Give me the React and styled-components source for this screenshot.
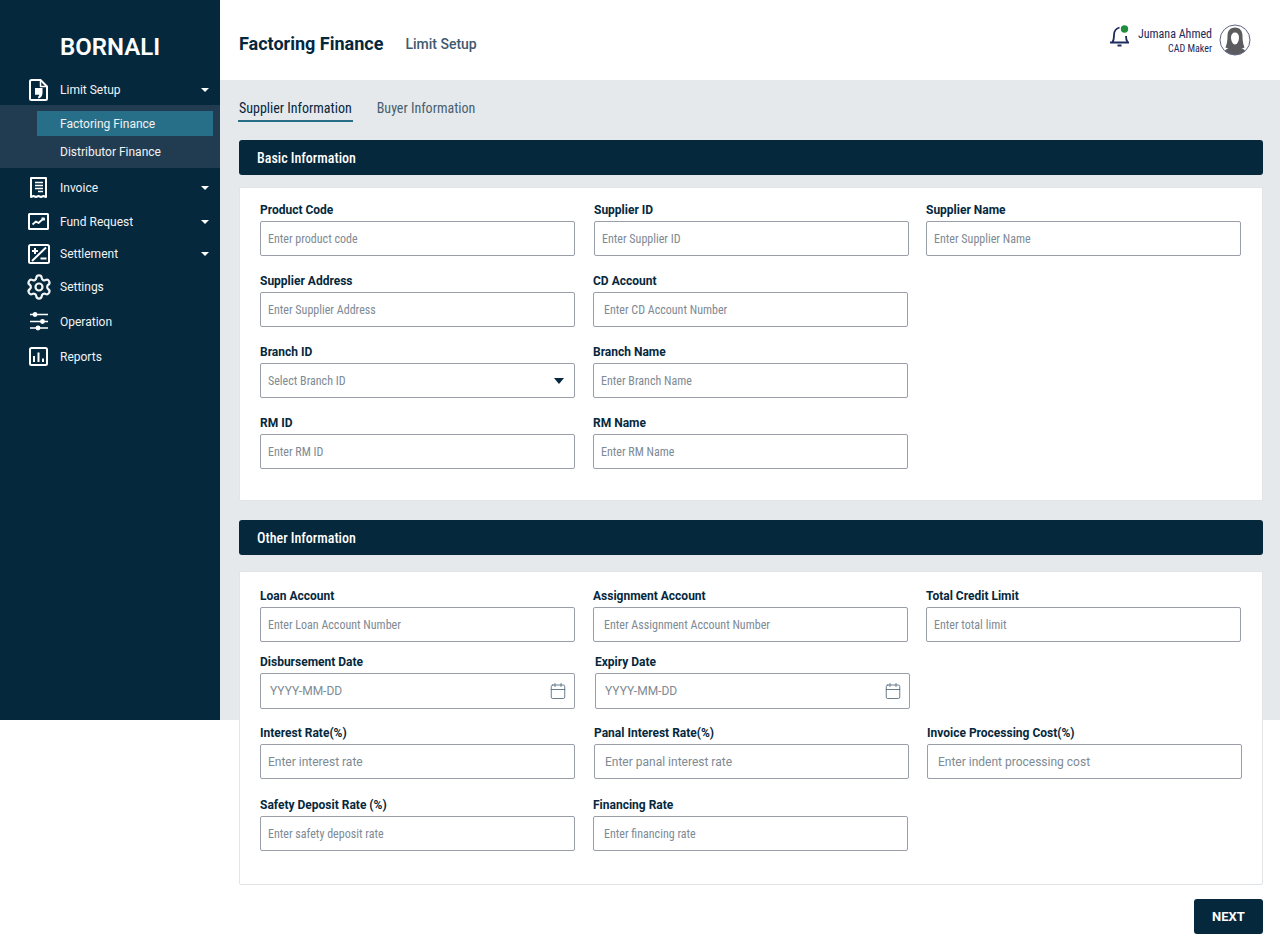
import React from 'react';
import styled, { createGlobalStyle } from 'styled-components';
import { Calendar, Settings } from 'lucide-react';

const GlobalStyle = createGlobalStyle`
  html, body {
    margin: 0;
    padding: 0;
    background: #fff;
    font-family: Roboto, "Liberation Sans", sans-serif;
  }
  * {
    box-sizing: border-box;
  }
`;

const NAVY = '#05283d';

const Shell = styled.div`
  display: grid;
  grid-template-columns: 220px 1fr;
  align-items: start;
  width: 1280px;
  height: 934px;
  overflow: hidden;
  background: linear-gradient(#e6e9ec 720px, #fff 720px);
`;

const Sidebar = styled.aside`
  height: 720px;
  background: ${NAVY};
  color: #fff;
`;

const Logo = styled.div`
  height: 74px;
  padding: 33px 0 0 60px;
  font-size: 24px;
  line-height: 28px;
  font-weight: 600;
`;

const NavItem = styled.div`
  display: flex;
  align-items: center;
  height: ${p => p.$h}px;
  padding: 0 11px 0 26px;
  font-size: 12px;
  color: #f1f3f5;
`;

const NavIcon = styled.span`
  display: flex;
  justify-content: center;
  align-items: center;
  width: 25px;
  margin-right: 9px;

  svg {
    flex-shrink: 0;
  }
`;

const NavLabel = styled.span`
  flex: 1;
  padding-top: 1px;
`;

const Caret = styled.span`
  width: 0;
  height: 0;
  border-left: 4px solid transparent;
  border-right: 4px solid transparent;
  border-top: 4px solid ${p => p.$color || '#fff'};
`;

const SelectCaret = styled(Caret)`
  border-width: 6px 5.5px 0;
`;

const SubMenu = styled.div`
  height: 63px;
  padding: 6px 7px 0 37px;
  background: #213c50;
`;

const SubItem = styled.div`
  height: ${p => (p.$active ? 25 : 31)}px;
  line-height: ${p => (p.$active ? 27 : 33)}px;
  padding-left: 23px;
  font-size: 12px;
  color: #f1f3f5;
  background: ${p => (p.$active ? '#276f88' : 'transparent')};
`;

const Main = styled.main`
  min-width: 0;
`;

const Header = styled.header`
  display: flex;
  align-items: center;
  height: 80px;
  padding: 0 29px 0 19px;
  background: #fff;
`;

const Title = styled.h1`
  margin: 7px 22px 0 0;
  font-size: 18px;
  font-weight: 700;
  color: ${NAVY};
`;

const SubTitle = styled.span`
  flex: 1;
  margin-top: 8px;
  font-size: 14px;
  font-weight: 500;
  color: #3f5a6e;
`;

const Bell = styled.span`
  display: flex;
  margin: 0 7px 8px 0;
`;

const User = styled.div`
  margin-right: 7px;
  text-align: right;
  color: #1d2a5b;
`;

const UserName = styled.div`
  font-size: 12px;
  line-height: 16px;
  font-stretch: 75%;
`;

const UserRole = styled.div`
  margin-top: 1px;
  font-size: 10px;
  line-height: 12px;
  font-stretch: 75%;
`;

const Content = styled.div`
  padding: 0 17px 0 19px;
`;

const Tabs = styled.div`
  display: flex;
  gap: 24px;
  height: 60px;
  padding-top: 19px;
`;

const Tab = styled.div`
  height: 23px;
  margin-left: ${p => (p.$active ? -1 : 0)}px;
  padding: 0 ${p => (p.$active ? 1 : 0)}px;
  font-size: 14px;
  line-height: 19px;
  font-stretch: 75%;
  color: ${p => (p.$active ? NAVY : '#46606f')};
  border-bottom: ${p => (p.$active ? '2px solid #276f88' : 'none')};
`;

const Band = styled.h2`
  height: 35px;
  margin: 0 0 ${p => p.$after}px;
  padding-left: 18px;
  border-radius: 3px;
  background: ${NAVY};
  color: #fff;
  font-size: 14px;
  line-height: 36px;
  font-weight: 500;
  font-stretch: 75%;
`;

const Card = styled.section`
  height: ${p => p.$h}px;
  margin-bottom: ${p => p.$after || 0}px;
  padding: ${p => p.$top}px 0 0 20px;
  background: #fff;
  border: 1px solid #e2e5e8;
  border-radius: 2px;
`;

const Row = styled.div`
  display: flex;
  margin-bottom: ${p => p.$after}px;
`;

const Field = styled.div`
  width: 315px;
  margin-left: ${p => p.$ml || 0}px;
`;

const Label = styled.label`
  display: block;
  margin-bottom: 4px;
  font-size: 12px;
  line-height: 14px;
  font-weight: 700;
  color: ${NAVY};
`;

const InputBox = styled.div`
  display: flex;
  align-items: center;
  height: ${p => p.$h || 35}px;
  padding: 0 ${p => p.$right || 7}px 0 ${p => p.$pad || 7}px;
  border: 1px solid #9a9ea8;
  border-radius: 2px;
  background: #fff;
`;

const Input = styled.input`
  flex: 1;
  min-width: 0;
  padding: 0;
  border: 0;
  outline: 0;
  background: transparent;
  font-family: inherit;
  font-size: 12px;
  font-stretch: ${p => (p.$wide ? '100%' : '75%')};
  color: ${NAVY};

  &::placeholder {
    color: #7e8a94;
    opacity: 1;
  }
`;

const Footer = styled.div`
  display: flex;
  justify-content: flex-end;
  margin-top: 14px;
`;

const NextButton = styled.button`
  width: 69px;
  height: 35px;
  border: 0;
  border-radius: 3px;
  background: ${NAVY};
  color: #fff;
  font-family: inherit;
  font-size: 13px;
  font-weight: 700;
`;

const Avatar = () => (
  <svg width="32" height="32" viewBox="0 0 32 32">
    <defs>
      <clipPath id="face">
        <circle cx="16" cy="16" r="15" />
      </clipPath>
    </defs>
    <circle cx="16" cy="16" r="15" fill="#fff" />
    <g clipPath="url(#face)" fill="#5c5c60">
      <path d="M16 3.500c-5 0-7.500 3.500-7.500 8.500 0 4-.5 8-2 11.500 2 1 4 1 5.500 1h8c1.500 0 3.500 0 5.500-1-1.500-3.500-2-7.500-2-11.500 0-5-2.500-8.500-7.500-8.500z" />
      <path d="M4 32c0-5 3-7.500 9-9h6c6 1.500 9 4 9 9z" />
    </g>
    <path d="M16 8.500c-2.500 0-4 2-4 5 0 3.500 1.800 7 4 7s4-3.500 4-7c0-3-1.500-5-4-5z" fill="#fff" />
    <circle cx="16" cy="16" r="15" fill="none" stroke="#5f6585" strokeWidth="1" />
  </svg>
);

const line = { fill: 'none', stroke: '#fff', strokeWidth: 2, strokeLinejoin: 'round' };

const icons = {
  limit: (
    <svg width="19" height="22" viewBox="0 0 19 22">
      <path {...line} d="M2.500 1h9L18 7.500V19.500a1.500 1.500 0 0 1-1.500 1.500h-14A1.500 1.500 0 0 1 1 19.500v-17A1.500 1.500 0 0 1 2.500 1z" />
      <path {...line} strokeWidth="1.500" d="M11.500 1.500v6h6" />
      <path fill="#fff" d="M6 9h7.500v5c0 2.500-1.500 5-4 5.500l-.7-1.800c1-.4 1.500-1.200 1.500-2H6z" />
    </svg>
  ),
  invoice: (
    <svg width="19" height="22" viewBox="0 0 19 22">
      <path {...line} d="M2 1h15v19l-2.500-1-2.500 1-2.500-1-2.500 1-2.500-1L2 20z" />
      <path stroke="#fff" strokeWidth="1.500" d="M6 5.500h8M6 8.500h8M6 11.500h8M9 14.500h5" />
    </svg>
  ),
  fund: (
    <svg width="21" height="17" viewBox="0 0 21 17">
      <rect {...line} x="1" y="1" width="19" height="15" rx="0.500" />
      <path {...line} strokeWidth="1.800" d="M4.500 11.500l3.500-3 2.500 1.500 5-4.500M13.500 5.500h2.500v2" />
    </svg>
  ),
  settlement: (
    <svg width="22" height="20" viewBox="0 0 22 20">
      <rect {...line} x="1" y="1" width="20" height="18" rx="1.500" />
      <path stroke="#fff" strokeWidth="2" d="M18 3.500L4 17M4 7h6M7 4v6M12.500 14.500h6" />
    </svg>
  ),
  operation: (
    <svg width="20" height="19" viewBox="0 0 20 19" stroke="#fff" strokeWidth="1.300">
      <path d="M1 2.500h18M1 9.500h18M1 16h18" />
      <circle cx="6" cy="2.500" r="1.800" fill="#fff" />
      <circle cx="13.500" cy="9.500" r="1.800" fill="#fff" />
      <circle cx="9" cy="16" r="1.800" fill="#fff" />
    </svg>
  ),
  reports: (
    <svg width="19" height="19" viewBox="0 0 19 19">
      <rect {...line} x="1" y="1" width="17" height="17" rx="1.500" />
      <path stroke="#fff" strokeWidth="2" d="M5 15V9M9.500 15V5.500M14 15v-3.500" />
    </svg>
  ),
};

const basicRows = [
  {
    after: 18,
    fields: [
      { label: 'Product Code', placeholder: 'Enter product code' },
      { label: 'Supplier ID', placeholder: 'Enter Supplier ID', ml: 19 },
      { label: 'Supplier Name', placeholder: 'Enter Supplier Name', ml: 17 },
    ],
  },
  {
    after: 18,
    fields: [
      { label: 'Supplier Address', placeholder: 'Enter Supplier Address' },
      { label: 'CD Account', placeholder: 'Enter CD Account Number', ml: 18, pad: 10 },
    ],
  },
  {
    after: 18,
    fields: [
      { label: 'Branch ID', placeholder: 'Select Branch ID', select: true },
      { label: 'Branch Name', placeholder: 'Enter Branch Name', ml: 18 },
    ],
  },
  {
    after: 0,
    fields: [
      { label: 'RM ID', placeholder: 'Enter RM ID' },
      { label: 'RM Name', placeholder: 'Enter RM Name', ml: 18 },
    ],
  },
];

const otherRows = [
  {
    after: 13,
    fields: [
      { label: 'Loan Account', placeholder: 'Enter Loan Account Number' },
      { label: 'Assignment Account', placeholder: 'Enter Assignment Account Number', ml: 18, pad: 10 },
      { label: 'Total Credit Limit', placeholder: 'Enter total limit', ml: 18 },
    ],
  },
  {
    after: 17,
    fields: [
      { label: 'Disbursement Date', placeholder: 'YYYY-MM-DD', date: true, wide: true, pad: 9 },
      { label: 'Expiry Date', placeholder: 'YYYY-MM-DD', date: true, wide: true, pad: 9, ml: 20 },
    ],
  },
  {
    after: 19,
    fields: [
      { label: 'Interest Rate(%)', placeholder: 'Enter interest rate', wide: true },
      { label: 'Panal Interest Rate(%)', placeholder: 'Enter panal interest rate', wide: true, ml: 19, pad: 10 },
      { label: 'Invoice Processing Cost(%)', placeholder: 'Enter indent processing cost', wide: true, ml: 18, pad: 10 },
    ],
  },
  {
    after: 0,
    fields: [
      { label: 'Safety Deposit Rate (%)', placeholder: 'Enter safety deposit rate' },
      { label: 'Financing Rate', placeholder: 'Enter financing rate', ml: 18, pad: 10 },
    ],
  },
];

const FormRows = ({ rows }) =>
  rows.map(row => (
    <Row key={row.fields[0].label} $after={row.after}>
      {row.fields.map(f => (
        <Field key={f.label} $ml={f.ml}>
          <Label>{f.label}</Label>
          <InputBox $h={f.date ? 36 : 35} $pad={f.pad} $right={f.select ? 10 : 7}>
            <Input placeholder={f.placeholder} $wide={f.wide} />
            {f.select && <SelectCaret $color={NAVY} />}
            {f.date && <Calendar size={18} strokeWidth={1.25} color="#5f7484" />}
          </InputBox>
        </Field>
      ))}
    </Row>
  ));

export default function App() {
  return (
    <Shell>
      <GlobalStyle />
      <Sidebar>
        <Logo>BORNALI</Logo>
        <NavItem $h={31}>
          <NavIcon>{icons.limit}</NavIcon>
          <NavLabel>Limit Setup</NavLabel>
          <Caret />
        </NavItem>
        <SubMenu>
          <SubItem $active>Factoring Finance</SubItem>
          <SubItem>Distributor Finance</SubItem>
        </SubMenu>
        <NavItem $h={39}>
          <NavIcon>{icons.invoice}</NavIcon>
          <NavLabel>Invoice</NavLabel>
          <Caret />
        </NavItem>
        <NavItem $h={29}>
          <NavIcon>{icons.fund}</NavIcon>
          <NavLabel>Fund Request</NavLabel>
          <Caret />
        </NavItem>
        <NavItem $h={35}>
          <NavIcon>{icons.settlement}</NavIcon>
          <NavLabel>Settlement</NavLabel>
          <Caret />
        </NavItem>
        <NavItem $h={31}>
          <NavIcon>
            <Settings size={28} strokeWidth={1.9} />
          </NavIcon>
          <NavLabel>Settings</NavLabel>
        </NavItem>
        <NavItem $h={39}>
          <NavIcon>{icons.operation}</NavIcon>
          <NavLabel>Operation</NavLabel>
        </NavItem>
        <NavItem $h={31}>
          <NavIcon>{icons.reports}</NavIcon>
          <NavLabel>Reports</NavLabel>
        </NavItem>
      </Sidebar>

      <Main>
        <Header>
          <Title>Factoring Finance</Title>
          <SubTitle>Limit Setup</SubTitle>
          <Bell>
            <svg width="22" height="24" viewBox="0 0 22 24" fill="none" stroke="#1d2a5b" strokeWidth="1.800">
              <path d="M1 18.500h19M3.500 18c1.500-2 1.500-4 1.500-7 0-3.500 2-6.500 5.500-7.500" />
              <path d="M17 12c0 2.500.4 4.500 1.500 6" />
              <path d="M8.500 21.500h4" strokeWidth="2" />
              <circle cx="15.500" cy="5" r="3.700" fill="#1f8f3f" stroke="none" />
            </svg>
          </Bell>
          <User>
            <UserName>Jumana Ahmed</UserName>
            <UserRole>CAD Maker</UserRole>
          </User>
          <Avatar />
        </Header>

        <Content>
          <Tabs>
            <Tab $active>Supplier Information</Tab>
            <Tab>Buyer Information</Tab>
          </Tabs>

          <Band $after={12}>Basic Information</Band>
          <Card $h={314} $top={15} $after={19}>
            <FormRows rows={basicRows} />
          </Card>

          <Band $after={16}>Other Information</Band>
          <Card $h={314} $top={17}>
            <FormRows rows={otherRows} />
          </Card>

          <Footer>
            <NextButton type="button">NEXT</NextButton>
          </Footer>
        </Content>
      </Main>
    </Shell>
  );
}
